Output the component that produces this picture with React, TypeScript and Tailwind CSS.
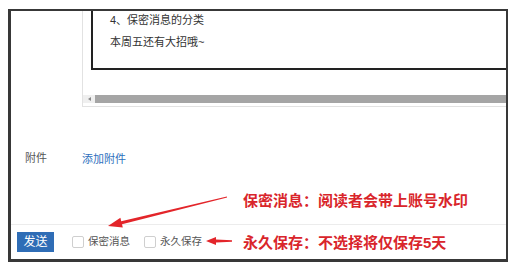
import React from 'react'

const sans = "font-['Liberation_Sans','Noto_Sans_CJK_SC',sans-serif]"

const Checkbox = ({ label }: { label: string }) => (
    <label className="flex items-center">
        <span className="w-[12px] h-[12px] border border-[#cfcfcf] rounded-[2px] bg-white" />
        <span className="ml-[4px] text-[10.5px] text-[#555]">{label}</span>
    </label>
)

const Arrows = () => (
    <svg className="absolute inset-0 pointer-events-none" width="515" height="268" viewBox="0 0 515 268">
        {/* arrow to 保密消息 */}
        <polygon
            fill="#e3252a"
            points="108,226 120.4,217.8 121.2,221.2 226.9,196.5 227.1,197.5 122.0,224.2 122.8,227.6"
        />
        {/* arrow to 永久保存 */}
        <polygon
            fill="#e3252a"
            points="206,241 216,237 216,239.6 232,240.3 232,241.7 216,242.4 216,245"
        />
    </svg>
)

export default function App() {
    return (
        <div className={`relative w-[515px] h-[268px] bg-white overflow-hidden ${sans}`}>
            <div className="ml-[8px] mt-[9px] w-[500px] h-[253px] border-t-2 border-l-[3px] border-r-2 border-b-[3px] border-[#383838] flex flex-col">
                {/* editor */}
                <div className="flex pl-[71px]">
                    <div className="flex-1 h-[96px] border-l border-b border-[#e2e2e2] flex flex-col">
                        <div className="ml-[8px] h-[59px] border-l-2 border-b-2 border-[#222] pl-[17px] text-[11px] text-[#333]">
                            <div className="h-[19px] leading-[19px]">4、保密消息的分类</div>
                            <div className="h-[21px] leading-[21px] mt-[2px]">本周五还有大招哦~</div>
                        </div>
                        <div className="mt-[25px] h-[8px] flex bg-[#efefef]">
                            <div className="w-[12px] flex items-center justify-center">
                                <span className="w-0 h-0 border-y-[2px] border-y-transparent border-r-[3px] border-r-[#888]" />
                            </div>
                            <div className="flex-1 bg-[#a5a5a5]" />
                        </div>
                    </div>
                </div>

                {/* attachments */}
                <div className="mt-[41px] h-[20px] flex items-center pl-[14px] text-[11px]">
                    <span className="w-[57px] text-[#555]">附件</span>
                    <span className="text-[#2e6fbd] mt-[2px]">添加附件</span>
                </div>

                <div className="flex-1" />

                {/* footer */}
                <div className="h-[35px] border-t border-[#ececec] flex items-center pl-[6px]">
                    <button className="w-[37px] h-[20px] bg-[#2f6db6] text-white text-[12px] leading-[20px]">发送</button>
                    <div className="ml-[18px]">
                        <Checkbox label="保密消息" />
                    </div>
                    <div className="ml-[14px]">
                        <Checkbox label="永久保存" />
                    </div>
                </div>
            </div>

            <Arrows />
            <div className="absolute left-[243px] top-[191px] h-[20px] leading-[20px] text-[15px] font-bold text-[#d9252b]">
                保密消息：阅读者会带上账号水印
            </div>
            <div className="absolute left-[243px] top-[233px] h-[20px] leading-[20px] text-[15px] font-bold text-[#d9252b]">
                永久保存：不选择将仅保存5天
            </div>
        </div>
    )
}
